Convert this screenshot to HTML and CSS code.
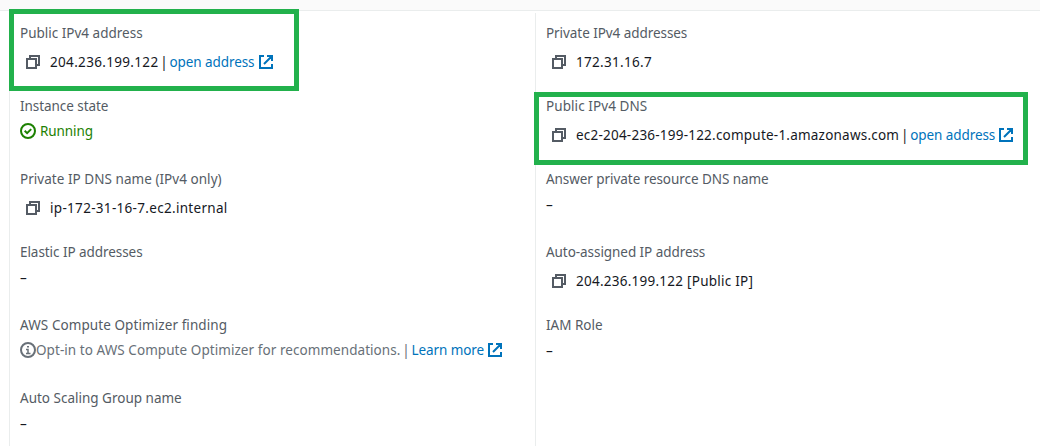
FILE: index.html
```
<!DOCTYPE html>
<html lang="en">
<head>
<meta charset="utf-8">
<title>Instance summary</title>
<link rel="stylesheet" href="styles.css">
</head>
<body>
<svg class="defs" width="0" height="0">
  <symbol id="copy" viewBox="0 0 16 16"><path d="M2 5h9v9H2zM5 5V2h9v9h-3"/></symbol>
  <symbol id="external" viewBox="0 0 16 16"><path d="M6 2H2v12h12v-4M9 2h5v5M14 2L6 10"/></symbol>
  <symbol id="check" viewBox="0 0 16 16"><circle cx="8" cy="8" r="7"/><path d="M4.7 7.8l2.4 2.4 4.1-4.1"/></symbol>
  <symbol id="info" viewBox="0 0 16 16"><circle cx="8" cy="8" r="7"/><path class="thin" d="M6 7.5h2v4M6 11.5h4.5M7 4.75h2"/></symbol>
</svg>
<div class="header"></div>
<main class="columns">
  <section class="column">
    <div class="field">
      <div class="label">Public IPv4 address</div>
      <div class="value copyable"><svg class="icon copy"><use href="#copy"/></svg><span class="s33">204.236.199.122</span><span class="pipe">|</span><a class="link open">open address</a><svg class="icon external wide"><use href="#external"/></svg></div>
    </div>
    <div class="field">
      <div class="label tight">Instance state</div>
      <div class="value running"><svg class="icon"><use href="#check"/></svg><span class="state">Running</span></div>
    </div>
    <div class="field">
      <div class="label s04">Private IP DNS name (IPv4 only)</div>
      <div class="value copyable"><svg class="icon copy"><use href="#copy"/></svg><span class="s31">ip-172-31-16-7.ec2.internal</span></div>
    </div>
    <div class="field">
      <div class="label tight">Elastic IP addresses</div>
      <div class="value dash">–</div>
    </div>
    <div class="field">
      <div class="label s08">AWS Compute Optimizer finding</div>
      <div class="value muted"><svg class="icon"><use href="#info"/></svg><span class="s06">Opt-in to AWS Compute Optimizer for recommendations.</span><span class="pipe">|</span><a class="link open">Learn more</a><svg class="icon external"><use href="#external"/></svg></div>
    </div>
    <div class="field">
      <div class="label">Auto Scaling Group name</div>
      <div class="value dash">–</div>
    </div>
    <div class="highlight address"></div>
  </section>
  <section class="column">
    <div class="field">
      <div class="label tight">Private IPv4 addresses</div>
      <div class="value copyable"><svg class="icon copy"><use href="#copy"/></svg><span class="s31">172.31.16.7</span></div>
    </div>
    <div class="field">
      <div class="label s08">Public IPv4 DNS</div>
      <div class="value copyable"><svg class="icon copy"><use href="#copy"/></svg><span class="s22">ec2-204-236-199-122.compute-1.amazonaws.com</span><span class="pipe">|</span><a class="link open">open address</a><svg class="icon external"><use href="#external"/></svg></div>
    </div>
    <div class="field">
      <div class="label tight">Answer private resource DNS name</div>
      <div class="value dash">–</div>
    </div>
    <div class="field">
      <div class="label tight">Auto-assigned IP address</div>
      <div class="value copyable"><svg class="icon copy"><use href="#copy"/></svg><span class="s25">204.236.199.122 [Public IP]</span></div>
    </div>
    <div class="field">
      <div class="label">IAM Role</div>
      <div class="value dash">–</div>
    </div>
    <div class="highlight dns"></div>
  </section>
</main>
</body>
</html>
```
FILE: styles.css
```
* { box-sizing: border-box; }
body {
  margin: 0;
  height: 446px;
  overflow: hidden;
  background: #fff;
  color: #16191f;
  font: 13.5px/20px "Noto Sans", "Open Sans", sans-serif;
}
.defs { display: block; }
.header { height: 11px; background: #fafafa; border-bottom: 1px solid #eaeded; }
.columns { display: grid; grid-template-columns: 526px 1fr; padding: 2px 0 0 9px; }
.column { position: relative; height: 433px; padding: 10px 0 0 10px; border-left: 1px solid #eaeded; }
.field { height: 73px; white-space: nowrap; }
.label { color: #545b64; }
.value { display: flex; align-items: center; height: 20px; margin-top: 5px; }
.dash { margin-top: 6px; }
.copyable { margin-top: 9px; padding-left: 5px; }
.icon { width: 16px; height: 16px; flex: none; fill: none; stroke: currentColor; stroke-width: 2; }
.thin { stroke-width: 1.5; }
.copy { margin-right: 9px; color: #545b64; }
.external { margin-left: 3px; color: #0073bb; }
.wide { margin-left: 4px; }
.pipe { width: 11px; text-align: center; }
.link { color: #0073bb; }
.open { letter-spacing: -0.08px; }
.running { color: #1d8102; }
.state { margin-left: 4px; letter-spacing: -0.1px; }
.muted { color: #687078; }
.tight { letter-spacing: -0.06px; }
.s04 { letter-spacing: 0.04px; }
.s06 { letter-spacing: 0.06px; }
.s08 { letter-spacing: 0.08px; }
.s22 { letter-spacing: 0.22px; }
.s25 { letter-spacing: 0.25px; }
.s31 { letter-spacing: 0.31px; }
.s33 { letter-spacing: 0.33px; }
.highlight { position: absolute; border: 5px solid #22b14c; }
.address { left: -1px; top: -4px; width: 290px; height: 82px; }
.dns { left: -2px; top: 79px; width: 494px; height: 73px; }
```
